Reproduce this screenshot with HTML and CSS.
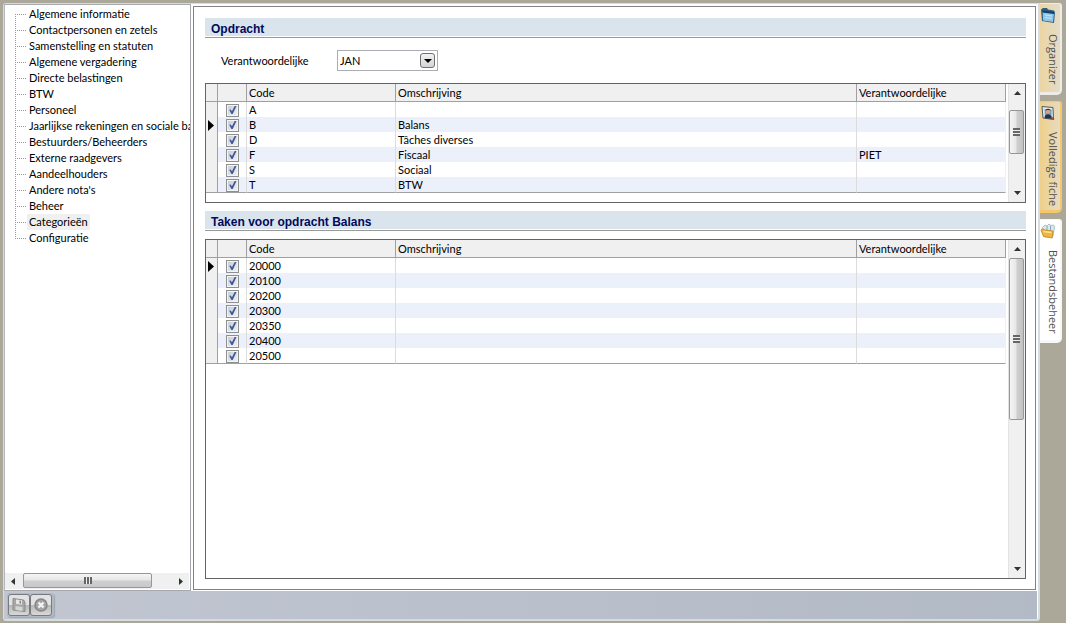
FILE: index.html
```html
<!DOCTYPE html>
<html lang="nl">
<head>
<meta charset="utf-8">
<title>Volledige fiche</title>
<link rel="stylesheet" href="styles.css">
</head>
<body>
<div class="window">
  <div class="panels">
    <nav class="tree" aria-label="Fiche">
      <ul class="tree-list">
        <li><a href="#">Algemene informatie</a></li>
        <li><a href="#">Contactpersonen en zetels</a></li>
        <li><a href="#">Samenstelling en statuten</a></li>
        <li><a href="#">Algemene vergadering</a></li>
        <li><a href="#">Directe belastingen</a></li>
        <li><a href="#">BTW</a></li>
        <li><a href="#">Personeel</a></li>
        <li><a href="#">Jaarlijkse rekeningen en sociale ba</a></li>
        <li><a href="#">Bestuurders/Beheerders</a></li>
        <li><a href="#">Externe raadgevers</a></li>
        <li><a href="#">Aandeelhouders</a></li>
        <li><a href="#">Andere nota's</a></li>
        <li><a href="#">Beheer</a></li>
        <li><a href="#" class="selected" aria-current="page">Categorieën</a></li>
        <li><a href="#">Configuratie</a></li>
      </ul>
      <div class="scroll scroll-h">
        <button class="arrow" aria-label="Links"><svg width="4" height="7"><path d="M4 0v7L0 3.500z"/></svg></button>
        <div class="track"><div class="thumb thumb-tree"><i class="grip"></i></div></div>
        <button class="arrow" aria-label="Rechts"><svg width="4" height="7"><path d="M0 0v7L4 3.500z"/></svg></button>
      </div>
    </nav>
    <main class="content">
      <h2 class="heading">Opdracht</h2>
      <div class="field">
        <label for="verantwoordelijke">Verantwoordelijke</label>
        <div class="combo">
          <select id="verantwoordelijke"><option>JAN</option></select>
          <span class="combo-button"><svg width="8" height="4"><path d="M0 0h8L4 4z"/></svg></span>
        </div>
      </div>
      <section class="grid grid-short">
        <table>
          <colgroup><col class="c-mark"><col class="c-check"><col class="c-code"><col><col class="c-resp"></colgroup>
          <thead><tr><th></th><th></th><th>Code</th><th>Omschrijving</th><th>Verantwoordelijke</th></tr></thead>
          <tbody>
            <tr><td></td><td><input type="checkbox" checked aria-label="A"></td><td>A</td><td></td><td></td></tr>
            <tr><td><svg class="marker" width="6" height="11"><path d="M0 0v11L6 5.500z"/></svg></td><td><input type="checkbox" checked aria-label="B"></td><td>B</td><td>Balans</td><td></td></tr>
            <tr><td></td><td><input type="checkbox" checked aria-label="D"></td><td>D</td><td>Tâches diverses</td><td></td></tr>
            <tr><td></td><td><input type="checkbox" checked aria-label="F"></td><td>F</td><td>Fiscaal</td><td>PIET</td></tr>
            <tr><td></td><td><input type="checkbox" checked aria-label="S"></td><td>S</td><td>Sociaal</td><td></td></tr>
            <tr><td></td><td><input type="checkbox" checked aria-label="T"></td><td>T</td><td>BTW</td><td></td></tr>
          </tbody>
        </table>
        <div class="scroll scroll-v">
          <button class="arrow" aria-label="Omhoog"><svg width="7" height="4"><path d="M0 4h7L3.500 0z"/></svg></button>
          <div class="track"><div class="thumb thumb-orders"><i class="grip"></i></div></div>
          <button class="arrow" aria-label="Omlaag"><svg width="7" height="4"><path d="M0 0h7L3.500 4z"/></svg></button>
        </div>
      </section>
      <h2 class="heading">Taken voor opdracht Balans</h2>
      <section class="grid grid-tall">
        <table>
          <colgroup><col class="c-mark"><col class="c-check"><col class="c-code"><col><col class="c-resp"></colgroup>
          <thead><tr><th></th><th></th><th>Code</th><th>Omschrijving</th><th>Verantwoordelijke</th></tr></thead>
          <tbody>
            <tr><td><svg class="marker" width="6" height="11"><path d="M0 0v11L6 5.500z"/></svg></td><td><input type="checkbox" checked aria-label="20000"></td><td>20000</td><td></td><td></td></tr>
            <tr><td></td><td><input type="checkbox" checked aria-label="20100"></td><td>20100</td><td></td><td></td></tr>
            <tr><td></td><td><input type="checkbox" checked aria-label="20200"></td><td>20200</td><td></td><td></td></tr>
            <tr><td></td><td><input type="checkbox" checked aria-label="20300"></td><td>20300</td><td></td><td></td></tr>
            <tr><td></td><td><input type="checkbox" checked aria-label="20350"></td><td>20350</td><td></td><td></td></tr>
            <tr><td></td><td><input type="checkbox" checked aria-label="20400"></td><td>20400</td><td></td><td></td></tr>
            <tr><td></td><td><input type="checkbox" checked aria-label="20500"></td><td>20500</td><td></td><td></td></tr>
          </tbody>
        </table>
        <div class="scroll scroll-v">
          <button class="arrow" aria-label="Omhoog"><svg width="7" height="4"><path d="M0 4h7L3.500 0z"/></svg></button>
          <div class="track"><div class="thumb thumb-tasks"><i class="grip"></i></div></div>
          <button class="arrow" aria-label="Omlaag"><svg width="7" height="4"><path d="M0 0h7L3.500 4z"/></svg></button>
        </div>
      </section>
    </main>
  </div>
  <footer class="toolbar">
    <div class="tool-group">
      <button class="tool" aria-label="Opslaan">
        <svg width="16" height="16" viewBox="0 0 16 16"><path d="M2 1.500 12.500 3 14 5v9.500L2 13z" fill="#a6a6a6" stroke="#8c8c8c"/><path d="M5 2.500v4.500l6 .8V3.200z" fill="#e6e6e6"/><path d="M8.500 3.500v3l1.500.2v-3z" fill="#888"/><path d="M4.500 9v4l7 .9v-4z" fill="#d5d5d5"/></svg>
      </button>
      <button class="tool" aria-label="Annuleren">
        <svg width="16" height="16" viewBox="0 0 16 16"><circle cx="8" cy="8" r="6" fill="#a4a4a4" stroke="#868686" stroke-width="1.500"/><path d="m5.500 5.500 5 5m0-5-5 5" stroke="#f4f4f4" stroke-width="2.400"/></svg>
      </button>
    </div>
  </footer>
</div>
<aside class="tabs">
  <button class="tab tab-organizer">
    <svg width="16" height="17" viewBox="0 0 16 17"><path d="M1 2.500 3 1h4l1 1.500 6 1 1 2-1 10.500L2 14z" fill="#2b5f86"/><path d="m2.700 5 11.300 1.500-1 8.500-10-1.500z" fill="#8fc6ea"/><path d="m2.500 3.500 11.500 1.500v2L2.700 5.500z" fill="#16405f"/><path d="m5 8 7 1m-7 1.500 7 1" stroke="#c5e4f7" fill="none"/></svg>
    <span>Organizer</span>
  </button>
  <button class="tab tab-fiche">
    <svg width="16" height="17" viewBox="0 0 16 17"><path d="m2 1.500 11 1 .5 12L3 13z" fill="#dfe8ef" stroke="#4d5c6b"/><path d="m4.500 4 7 .5v8l-6.500-.7z" fill="#6d9fc8"/><circle cx="8" cy="6.500" r="2.300" fill="#d9a27c"/><path d="M5.700 6c0-3 4.800-3 4.800 0l-1-1H7z" fill="#3d2a20"/><path d="M4.500 13c0-5 7.500-5 7.500 1z" fill="#29323d"/><path d="m11 12 3 2.500" stroke="#b73a2e" stroke-width="1.500"/></svg>
    <span>Volledige fiche</span>
  </button>
  <button class="tab tab-files">
    <svg width="16" height="17" viewBox="0 0 16 17"><path d="m2 5 3-3 2 1 2-2 2 1.500L13.500 2l1 2-1.500 9-8 1z" fill="#dce9ee" stroke="#9eb0b5" stroke-width=".8"/><path d="M7 3v5m3.500-5v5" stroke="#7fa6b8"/><path d="m1 7 2-1.200L5 7l8 1-.8 7L3.500 13.500z" fill="#f0b53c" stroke="#bd8420" stroke-width=".8"/><path d="m3.500 8.500 8 1" stroke="#ffe49a" stroke-width="1.500"/></svg>
    <span>Bestandsbeheer</span>
  </button>
</aside>
</body>
</html>
```
FILE: styles.css
```css
* { box-sizing: border-box; }

body {
  display: flex;
  height: 100vh;
  margin: 0;
  padding: 3px 4px 2px 3px;
  overflow: hidden;
  background: #aca899;
  color: #000;
  font: 11px/16px Lato, "Liberation Sans", sans-serif;
}

button { margin: 0; padding: 0; border: 0; background: none; font: inherit; }
svg { display: block; flex: none; }

.window {
  display: flex;
  flex: 1;
  flex-direction: column;
  min-width: 0;
  border: 1px solid #d6dce0;
  border-width: 1px 2px 2px 1px;
  border-radius: 3px 0 3px 3px;
  background: #fff;
}

.panels { display: flex; flex: 1; gap: 2px; min-height: 0; padding-right: 2px; }

/* Navigation tree */
.tree {
  display: flex;
  flex: none;
  flex-direction: column;
  justify-content: space-between;
  width: 187px;
  border: 1px solid #a5a8ac;
  border-left-color: #b4b8bc;
}

.tree-list {
  margin: 0;
  padding: 1px 0 0 10px;
  overflow: hidden;
  list-style: none;
  white-space: nowrap;
}

.tree-list li {
  display: flex;
  align-items: center;
  height: 16px;
  background:
    repeating-linear-gradient(to bottom, #999 0 1px, transparent 1px 2px) 0 0 / 1px 16px no-repeat,
    repeating-linear-gradient(to right, #999 0 1px, transparent 1px 2px) 0 8px / 11px 1px no-repeat;
}
.tree-list li:first-child { background-position: 0 8px, 0 8px; }
.tree-list li:last-child { background-size: 1px 8px, 11px 1px; }

.tree-list a {
  margin-left: 12px;
  padding: 0 2px;
  color: #000;
  text-decoration: none;
}
.tree-list .selected { background: #f0f0f0; }

/* Scroll bars */
.scroll { display: flex; flex: none; background: #f0f0f0; }
.track { display: flex; flex: 1; }
.arrow { display: flex; flex: none; align-items: center; justify-content: center; width: 16px; height: 16px; fill: #333; }
.thumb { display: flex; align-items: center; justify-content: center; border: 1px solid #979797; border-radius: 2px; }

.scroll-h { height: 16px; margin: 0 1px 1px 0; }
.scroll-h .thumb { height: 15px; background: linear-gradient(#f5f5f5, #e6e6e6 48%, #cfcfcf 52%, #c8c8c8); }
.scroll-h .grip { width: 8px; height: 7px; background: repeating-linear-gradient(to right, #666 0 2px, #eee 2px 3px); }
.thumb-tree { width: 85%; margin-left: 2px; }

.scroll-v { flex-direction: column; width: 17px; padding-right: 1px; border-left: 1px solid #e3e3e3; }
.scroll-v .thumb { width: 15px; background: linear-gradient(to right, #f5f5f5, #e6e6e6 48%, #cfcfcf 52%, #c3c3c6); }
.scroll-v .grip { width: 7px; height: 8px; background: repeating-linear-gradient(to bottom, #666 0 2px, #eee 2px 3px); }
.scroll-v .arrow { height: 18px; }
.thumb-orders { height: 44px; margin-top: 8px; }
.thumb-tasks { height: 162px; }

/* Main panel */
.content {
  display: flex;
  flex: 1;
  flex-direction: column;
  min-width: 0;
  margin: 2px 0 1px;
  padding: 11px 9px 10px 11px;
  border: 1px solid #808285;
}

.heading {
  flex: none;
  height: 20px;
  margin: 0;
  padding-left: 6px;
  border-bottom: 1px solid #999;
  background: linear-gradient(#dae4ec 18px, #fff 18px);
  color: #000a5e;
  font: bold 12px/22px "Liberation Sans", Arial, sans-serif;
}

.field { display: flex; align-items: center; padding: 12px 0 12px 16px; }
.field label { width: 116px; }

.combo { position: relative; width: 101px; height: 21px; }
.combo select {
  width: 100%;
  height: 100%;
  padding: 0 20px 0 2px;
  border: 1px solid #abadb3;
  border-radius: 0;
  appearance: none;
  background: #fff;
  color: #000;
  font: inherit;
}
.combo-button {
  display: flex;
  position: absolute;
  top: 3px;
  right: 3px;
  align-items: center;
  justify-content: center;
  width: 15px;
  height: 15px;
  border: 1px solid #707070;
  border-radius: 3px;
  background: linear-gradient(#f2f2f2, #d4d4d4);
  pointer-events: none;
}

/* Data grids */
.grid {
  display: flex;
  align-items: flex-start;
  gap: 2px;
  min-height: 0;
  border: 1px solid #646464;
}
.grid .scroll-v { align-self: stretch; }
.grid-short { flex: none; height: 120px; margin-bottom: 8px; }
.grid-tall { flex: 1; margin-top: 8px; }

table { flex: 1; min-width: 0; border-collapse: separate; border-spacing: 0; table-layout: fixed; }
.c-mark { width: 12px; }
.c-check { width: 29px; }
.c-code, .c-resp { width: 149px; }

th {
  height: 18px;
  padding: 1px 0 0 2px;
  border-right: 1px solid #a0a0a0;
  border-bottom: 1px solid #a0a0a0;
  background: #f0f0f0;
  font-weight: normal;
  line-height: 16px;
  text-align: left;
}

td { height: 15px; padding: 1px 0 0 2px; border-right: 1px solid #dcdcdc; line-height: 14px; }
td:last-child { border-right-color: #f0f0f0; }
td:first-child { border-right-color: #a0a0a0; background: #f0f0f0; }
td:nth-child(2) { padding-left: 8px; }
tbody tr:nth-child(even) { background: #ebf0fb; }
tbody tr:last-child td { height: 16px; border-bottom: 1px solid #a0a0a0; }

input[type="checkbox"] {
  display: block;
  width: 13px;
  height: 13px;
  margin: 0;
  border: 1px solid #8e8f8f;
  appearance: none;
  background: linear-gradient(135deg, #c5cbd3, #f2f3f4);
  box-shadow: inset 0 0 0 1px #f4f4f4;
}
input[type="checkbox"]::before {
  display: block;
  width: 11px;
  height: 11px;
  background: #41579a;
  clip-path: polygon(20% 48%, 34% 46%, 45% 62%, 70% 14%, 86% 14%, 52% 86%, 40% 86%);
  content: "";
}

/* Bottom tool bar */
.toolbar {
  display: flex;
  flex: none;
  align-items: flex-start;
  height: 28px;
  margin-right: 1px;
  padding: 2px 3px 0;
  background: linear-gradient(to right, #c1c6d1, #b2bac6);
}
.tool-group { display: flex; padding: 1px 2px 1px 1px; border-radius: 3px; background: #b0b8c2; box-shadow: 1px 1px 1px #9fa7b1; }
.tool {
  display: flex;
  align-items: center;
  justify-content: center;
  width: 22px;
  height: 22px;
  border: 1px solid #777a7e;
  border-radius: 3px;
  background: linear-gradient(#e2e2e2 48%, #b9b9b9 52%, #d8d8d8);
}

/* Side tabs */
.tabs { display: flex; flex: none; flex-direction: column; width: 22px; gap: 6px; }
.tab {
  display: flex;
  flex-direction: column;
  align-items: flex-start;
  padding: 3px 0 0;
  border: 1px solid #eeece6;
  border-width: 1px 2px 3px 0;
  border-radius: 0 3px 5px 0;
  background: linear-gradient(to right, #ecd5a3, #e3dcc8);
  color: #505050;
  font: 11px/14px "Open Sans", sans-serif;
}
.tab span { margin: 10px 0 0 6px; writing-mode: vertical-rl; white-space: nowrap; }
.tab-organizer { height: 92px; }
.tab-fiche { height: 112px; border-color: #f5c66b; background: linear-gradient(to right, #efd08a, #e6dcc0); }
.tab-files { height: 124px; border-color: #f7f7f7; background: #fff; }
```
